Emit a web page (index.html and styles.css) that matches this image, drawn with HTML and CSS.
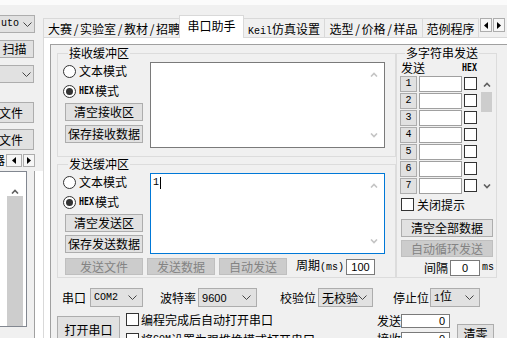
FILE: index.html
```html
<!DOCTYPE html>
<html>
<head>
  <meta charset="utf-8">
  <title>STC-ISP 串口助手</title>
  <link rel="stylesheet" href="styles.css">
</head>
<body>
<div class="topline"></div>
<div class="wrap">
  <div class="side">
    <div class="combo side-combo"><span class="mono">uto</span><svg width="9" height="5"><polyline points="0.5,0.5 4.5,4.5 8.5,0.5" fill="none" stroke="#444"/></svg></div>
    <div class="btn side-scan">扫描</div>
    <div class="combo side-combo2"><span></span><svg width="9" height="5"><polyline points="0.5,0.5 4.5,4.5 8.5,0.5" fill="none" stroke="#444"/></svg></div>
    <div class="btn side-file">文件</div>
    <div class="btn side-file second">文件</div>
    <div class="side-nav">
      <span class="cut">器</span>
      <div class="arrow-btn wide"><svg width="4" height="7"><polygon points="4,0 0,3.5 4,7" fill="#000"/></svg></div>
      <div class="arrow-btn"><svg width="4" height="7"><polygon points="0,0 4,3.5 0,7" fill="#000"/></svg></div>
    </div>
    <div class="side-list">
      <div class="listbox">
        <div class="lb-bar">
          <svg width="8" height="5"><polyline points="1,4.5 4,1.5 7,4.5" fill="none" stroke="#606060" stroke-width="1.6"/></svg>
          <div class="lb-thumb"></div>
        </div>
      </div>
      <div class="side-strip"></div>
    </div>
  </div>

  <div class="tabs">
    <div class="tab-strip">
      <div class="tab t1">大赛<span class="sl">/</span>实验室<span class="sl">/</span>教材<span class="sl">/</span>招聘</div>
      <div class="tab t2 active">串口助手</div>
      <div class="tab t3"><span class="mono">Keil</span>仿真设置</div>
      <div class="tab t4">选型<span class="sl">/</span>价格<span class="sl">/</span>样品</div>
      <div class="tab t5">范例程序</div>
      <div class="tab-arrows">
        <div class="arrow-btn"><svg width="4" height="7"><polygon points="4,0 0,3.5 4,7" fill="#000"/></svg></div>
        <div class="arrow-btn"><svg width="4" height="7"><polygon points="0,0 4,3.5 0,7" fill="#000"/></svg></div>
      </div>
    </div>

    <div class="page">
      <div class="panel">
        <div class="upper">
          <div class="buffers">
            <fieldset class="group recv">
              <legend>接收缓冲区</legend>
              <div class="buf-row">
                <div class="buf-ctl">
                  <div class="radio"><span class="dot"></span>文本模式</div>
                  <div class="radio on"><span class="dot"></span><span class="hex">HEX</span>模式</div>
                  <div class="btn b1">清空接收区</div>
                  <div class="btn b2">保存接收数据</div>
                </div>
                <div class="textbox">
                  <div class="text"></div>
                  <div class="vscroll">
                    <svg width="8" height="5"><polyline points="1,4.5 4,1.5 7,4.5" fill="none" stroke="#c4c4c4" stroke-width="1.6"/></svg>
                    <svg width="8" height="5"><polyline points="1,0.5 4,3.5 7,0.5" fill="none" stroke="#c4c4c4" stroke-width="1.6"/></svg>
                  </div>
                </div>
              </div>
            </fieldset>

            <fieldset class="group send">
              <legend>发送缓冲区</legend>
              <div class="buf-row">
                <div class="buf-ctl">
                  <div class="radio"><span class="dot"></span>文本模式</div>
                  <div class="radio on"><span class="dot"></span><span class="hex">HEX</span>模式</div>
                  <div class="btn b1">清空发送区</div>
                  <div class="btn b2">保存发送数据</div>
                </div>
                <div class="textbox focus">
                  <div class="text"><span class="mono">1</span><span class="caret"></span></div>
                  <div class="vscroll">
                    <svg width="8" height="5"><polyline points="1,4.5 4,1.5 7,4.5" fill="none" stroke="#c4c4c4" stroke-width="1.6"/></svg>
                    <svg width="8" height="5"><polyline points="1,0.5 4,3.5 7,0.5" fill="none" stroke="#c4c4c4" stroke-width="1.6"/></svg>
                  </div>
                </div>
              </div>
              <div class="sendbar">
                <div class="btn off sf">发送文件</div>
                <div class="btn off sd">发送数据</div>
                <div class="btn off sa">自动发送</div>
                <span class="period">周期<span class="mono">(ms)</span></span>
                <div class="field num">100</div>
              </div>
            </fieldset>
          </div>

          <fieldset class="group multi">
            <legend>多字符串发送</legend>
            <div class="mhead"><span class="mlabel">发送</span><span class="hex">HEX</span></div>
            <div class="mlist">
              <div class="mrows">
                <div class="mrow"><div class="btn idx mono">1</div><div class="field min"></div><div class="chk"></div></div>
                <div class="mrow"><div class="btn idx mono">2</div><div class="field min"></div><div class="chk"></div></div>
                <div class="mrow"><div class="btn idx mono">3</div><div class="field min"></div><div class="chk"></div></div>
                <div class="mrow"><div class="btn idx mono">4</div><div class="field min"></div><div class="chk"></div></div>
                <div class="mrow"><div class="btn idx mono">5</div><div class="field min"></div><div class="chk"></div></div>
                <div class="mrow"><div class="btn idx mono">6</div><div class="field min"></div><div class="chk"></div></div>
                <div class="mrow"><div class="btn idx mono">7</div><div class="field min"></div><div class="chk"></div></div>
              </div>
              <div class="mscroll">
                <div class="sb-btn"><svg width="8" height="5"><polyline points="1,4.5 4,1.5 7,4.5" fill="none" stroke="#606060" stroke-width="1.6"/></svg></div>
                <div class="sb-thumb"></div>
                <div class="sb-track"></div>
                <div class="sb-btn"><svg width="8" height="5"><polyline points="1,0.5 4,3.5 7,0.5" fill="none" stroke="#606060" stroke-width="1.6"/></svg></div>
              </div>
            </div>
            <div class="close-tip"><div class="chk"></div>关闭提示</div>
            <div class="btn clear-all">清空全部数据</div>
            <div class="btn off auto-loop">自动循环发送</div>
            <div class="gap-row"><span>间隔</span><div class="field gapin">0</div><span class="mono">ms</span></div>
          </fieldset>
        </div>

        <div class="portrow">
          <span>串口</span>
          <div class="combo c-port"><span class="mono">COM2</span><svg width="9" height="5"><polyline points="0.5,0.5 4.5,4.5 8.5,0.5" fill="none" stroke="#444"/></svg></div>
          <span class="l-baud">波特率</span>
          <div class="combo c-baud"><span class="sans">9600</span><svg width="9" height="5"><polyline points="0.5,0.5 4.5,4.5 8.5,0.5" fill="none" stroke="#444"/></svg></div>
          <span class="l-parity">校验位</span>
          <div class="combo c-parity"><span>无校验</span><svg width="9" height="5"><polyline points="0.5,0.5 4.5,4.5 8.5,0.5" fill="none" stroke="#444"/></svg></div>
          <span class="l-stop">停止位</span>
          <div class="combo c-stop"><span><span class="mono">1</span>位</span><svg width="9" height="5"><polyline points="0.5,0.5 4.5,4.5 8.5,0.5" fill="none" stroke="#444"/></svg></div>
        </div>

        <div class="actrow">
          <div class="btn open">打开串口</div>
          <div class="opts">
            <div class="opt"><div class="chk"></div>编程完成后自动打开串口</div>
            <div class="opt second"><div class="chk"></div>将<span class="mono">COM</span>设置为强推挽模式打开串口</div>
          </div>
          <div class="counts">
            <div class="cnt"><span>发送</span><div class="field cntin">0</div></div>
            <div class="cnt second"><span>接收</span><div class="field cntin">0</div></div>
          </div>
          <div class="btn zero">清零</div>
        </div>
      </div>
    </div>
  </div>
</div>
</body>
</html>
```

FILE: styles.css
```css
* { box-sizing: border-box; }
body {
  margin: 0;
  width: 507px;
  height: 338px;
  overflow: hidden;
  background: #f0f0f0;
  color: #000;
  font-family: "Noto Sans CJK SC", sans-serif;
  font-size: 12px;
  line-height: 14px;
}
.mono { font-family: "Liberation Mono", monospace; font-size: 10px; }
.sans { font-family: "Liberation Sans", sans-serif; font-size: 11px; }
.hex {
  display: inline-block;
  width: 16px;
  font-family: "DejaVu Sans Mono", monospace;
  font-size: 11px;
  font-weight: bold;
  transform: scaleX(0.75);
  transform-origin: left center;
  white-space: nowrap;
}
.sl { display: inline-block; width: 8px; text-align: center; }

.topline { height: 5px; background: #fbfbfb; }
.wrap { display: flex; height: 333px; }

/* common controls */
.btn {
  display: flex;
  align-items: center;
  justify-content: center;
  background: #e1e1e1;
  border: 1px solid #adadad;
  white-space: nowrap;
  flex: none;
}
.btn.off { background: #cccccc; border-color: #bfbfbf; color: #838383; }
.combo {
  display: flex;
  align-items: center;
  justify-content: space-between;
  height: 19px;
  padding: 0 5px 0 3px;
  background: #e1e1e1;
  border: 1px solid #adadad;
  white-space: nowrap;
  flex: none;
}
.field { background: #fff; border: 1px solid #7a7a7a; flex: none; }
.chk { width: 13px; height: 13px; border: 1px solid #333; background: #fff; flex: none; }
.arrow-btn {
  display: flex;
  align-items: center;
  justify-content: center;
  width: 12px;
  height: 14px;
  background: #f6f6f6;
  border: 1px solid #adadad;
}

/* left column */
.side { width: 43px; flex: none; display: flex; flex-direction: column; overflow: hidden; }
.side .btn, .side .combo { border-left: 0; }
.side-combo { width: 35px; height: 18px; margin-top: 10px; padding: 0 2px 0 1px; }
.side-scan { width: 34px; height: 18px; margin-top: 7px; padding-right: 4px; }
.side-combo2 { width: 34px; height: 18px; margin-top: 7px; padding-right: 2px; }
.side-file { width: 34px; height: 21px; margin-top: 19px; justify-content: flex-end; padding-right: 10px; }
.side-file.second { margin-top: 6px; }
.side-nav { display: flex; align-items: center; height: 14px; margin-top: 3px; white-space: nowrap; }
.side-nav .cut { margin-left: -7px; }
.side-nav .arrow-btn { height: 13px; margin-left: 1px; }
.side-nav .arrow-btn.wide { width: 16px; margin-left: 1px; }
.side-list { display: flex; flex: 1; margin-top: 4px; }
.listbox { width: 27px; height: 156px; background: #fff; border: 1px solid #828790; border-left: 0; flex: none; }
.lb-bar { display: flex; flex-direction: column; align-items: center; width: 16px; height: 100%; margin-left: 7px; padding-top: 17px; }
.lb-thumb { width: 16px; flex: 1; margin-top: 2px; background: #cdcdcd; }
.side-strip { width: 9px; margin-left: 7px; background: #fff; border-left: 1px solid #a0a0a0; }

/* tabs */
.tabs { flex: 1; display: flex; flex-direction: column; min-width: 0; }
.tab-strip { height: 32px; display: flex; align-items: flex-end; flex: none; }
.tab {
  height: 19px;
  padding-top: 3px;
  margin-left: -1px;
  background: #f0f0f0;
  border: 1px solid #d9d9d9;
  border-bottom: 0;
  text-align: center;
  white-space: nowrap;
  overflow: hidden;
  flex: none;
}
.tab.t1 { width: 137px; margin-left: 0; text-align: left; padding-left: 4px; }
.tab.t2 { width: 65px; }
.tab.t3 { width: 82px; }
.tab.t4 { width: 99px; }
.tab.t5 { width: 57px; }
.tab.active {
  height: 23px;
  padding-top: 3px;
  margin-bottom: -1px;
  background: #fff;
  position: relative;
  z-index: 1;
}
.tab-arrows { display: flex; gap: 1px; align-self: flex-start; margin-top: 13px; margin-left: 1px; }

.page {
  flex: 1;
  background: #fff;
  border-top: 1px solid #d9d9d9;
  border-left: 1px solid #d9d9d9;
  padding: 6px 0 0 6px;
}
.panel { height: 100%; background: #f0f0f0; border-top: 1px solid #a0a0a0; border-left: 1px solid #a0a0a0; }

/* group boxes */
.upper { display: flex; padding-left: 6px; margin-top: 1px; }
.buffers { width: 339px; display: flex; flex-direction: column; flex: none; }
fieldset.group { margin: 0; min-width: 0; border: 1px solid #dcdcdc; }
fieldset.group legend { padding: 0 1px; margin-left: 5px; line-height: 14px; }
.recv { padding: 1px 10px 8px 5px; }
.send { padding: 1px 10px 2px 5px; margin-top: 2px; }

.buf-row { display: flex; }
.buf-ctl { width: 80px; flex: none; }
.radio { display: flex; align-items: center; height: 20px; white-space: nowrap; }
.dot {
  display: flex;
  align-items: center;
  justify-content: center;
  width: 13px;
  height: 13px;
  margin-right: 3px;
  border: 1px solid #333;
  border-radius: 50%;
  background: #fff;
}
.radio.on .dot::after { content: ""; width: 7px; height: 7px; border-radius: 50%; background: #333; }
.buf-ctl .btn { width: 78px; height: 18px; margin-left: 2px; }
.buf-ctl .b1 { margin-top: 2px; }
.recv .b2 { margin-top: 4px; }
.send .b2 { margin-top: 3px; }

.textbox { display: flex; width: 235px; margin: 1px 0 0 7px; background: #fff; border: 1px solid #7a7a7a; }
.recv .textbox { height: 86px; }
.send .textbox { height: 81px; }
.textbox.focus { border-color: #0078d7; }
.textbox .text { flex: 1; padding: 2px 2px; display: flex; align-items: flex-start; }
.caret { display: inline-block; width: 1px; height: 12px; margin: 1px 0 0 1px; background: #000; }
.vscroll { width: 20px; display: flex; flex-direction: column; justify-content: space-between; align-items: center; padding: 9px 0 9px; }

.sendbar { display: flex; align-items: center; height: 17px; margin-top: 4px; }
.sendbar .btn { height: 17px; }
.sendbar .sf { width: 78px; margin-left: 2px; }
.sendbar .sd, .sendbar .sa { width: 68px; margin-left: 4px; }
.period { margin-left: 9px; white-space: nowrap; }
.num {
  display: flex; align-items: center; justify-content: center;
  width: 29px; height: 16px; margin-left: 2px;
  font-family: "Liberation Sans", sans-serif; font-size: 11px;
}

/* multi string */
.multi { width: 101px; margin-left: 1px; padding: 0 2px 0 3px; flex: none; }
.mhead { display: flex; align-items: center; height: 16px; }
.mlabel { width: 61px; margin-left: 1px; }
.mlist { display: flex; }
.mrows { width: 77px; flex: none; }
.mrow { display: flex; height: 16px; margin-bottom: 1px; }
.mrow .idx { width: 17px; height: 16px; }
.field.min { width: 43px; height: 16px; margin-left: 2px; border-color: #a0a0a0; }
.mrow .chk { margin: 1px 0 0 2px; }
.mscroll { display: flex; flex-direction: column; width: 13px; height: 118px; margin-left: 3px; }
.sb-btn { height: 16px; display: flex; align-items: center; justify-content: center; }
.sb-thumb { height: 20px; width: 11px; margin-left: 1px; background: #cdcdcd; }
.sb-track { flex: 1; }
.close-tip { display: flex; align-items: center; height: 17px; margin: 1px 0 0 1px; white-space: nowrap; }
.close-tip .chk { margin-right: 3px; }
.clear-all { width: 92px; height: 18px; margin: 6px 0 0 1px; }
.auto-loop { width: 92px; height: 17px; margin: 3px 0 0 1px; }
.gap-row { display: flex; align-items: center; justify-content: flex-end; height: 18px; margin-top: 2px; white-space: nowrap; }
.gapin {
  display: flex; align-items: center; justify-content: center;
  width: 30px; height: 16px; margin: 0 2px 0 2px;
  font-family: "Liberation Sans", sans-serif; font-size: 11px;
}

/* bottom rows */
.portrow { display: flex; align-items: center; height: 19px; margin-top: 10px; padding-left: 11px; white-space: nowrap; }
.c-port { width: 53px; margin-left: 4px; }
.l-baud { margin-left: 17px; }
.c-baud { width: 59px; margin-left: 2px; }
.l-parity { margin-left: 23px; }
.c-parity { width: 55px; margin-left: 2px; }
.l-stop { margin-left: 20px; }
.c-stop { width: 50px; margin-left: 1px; }

.actrow { display: flex; align-items: flex-start; margin-top: 4px; white-space: nowrap; }
.open { width: 63px; height: 28px; margin: 5px 0 0 6px; }
.opts { width: 251px; margin-left: 6px; flex: none; }
.opt { display: flex; align-items: center; height: 17px; }
.opt.second { margin-top: 3px; }
.opt .chk { margin-right: 2px; }
.counts { display: flex; flex-direction: column; flex: none; }
.cnt { display: flex; align-items: center; height: 15px; margin-top: 2px; }
.cnt.second { margin-top: 3px; }
.cntin {
  width: 49px; height: 14px; margin-left: 0;
  text-align: right; padding-right: 4px;
  font-family: "Liberation Sans", sans-serif; font-size: 11px; line-height: 12px;
}
.zero { width: 37px; height: 20px; margin: 13px 0 0 7px; }
```
